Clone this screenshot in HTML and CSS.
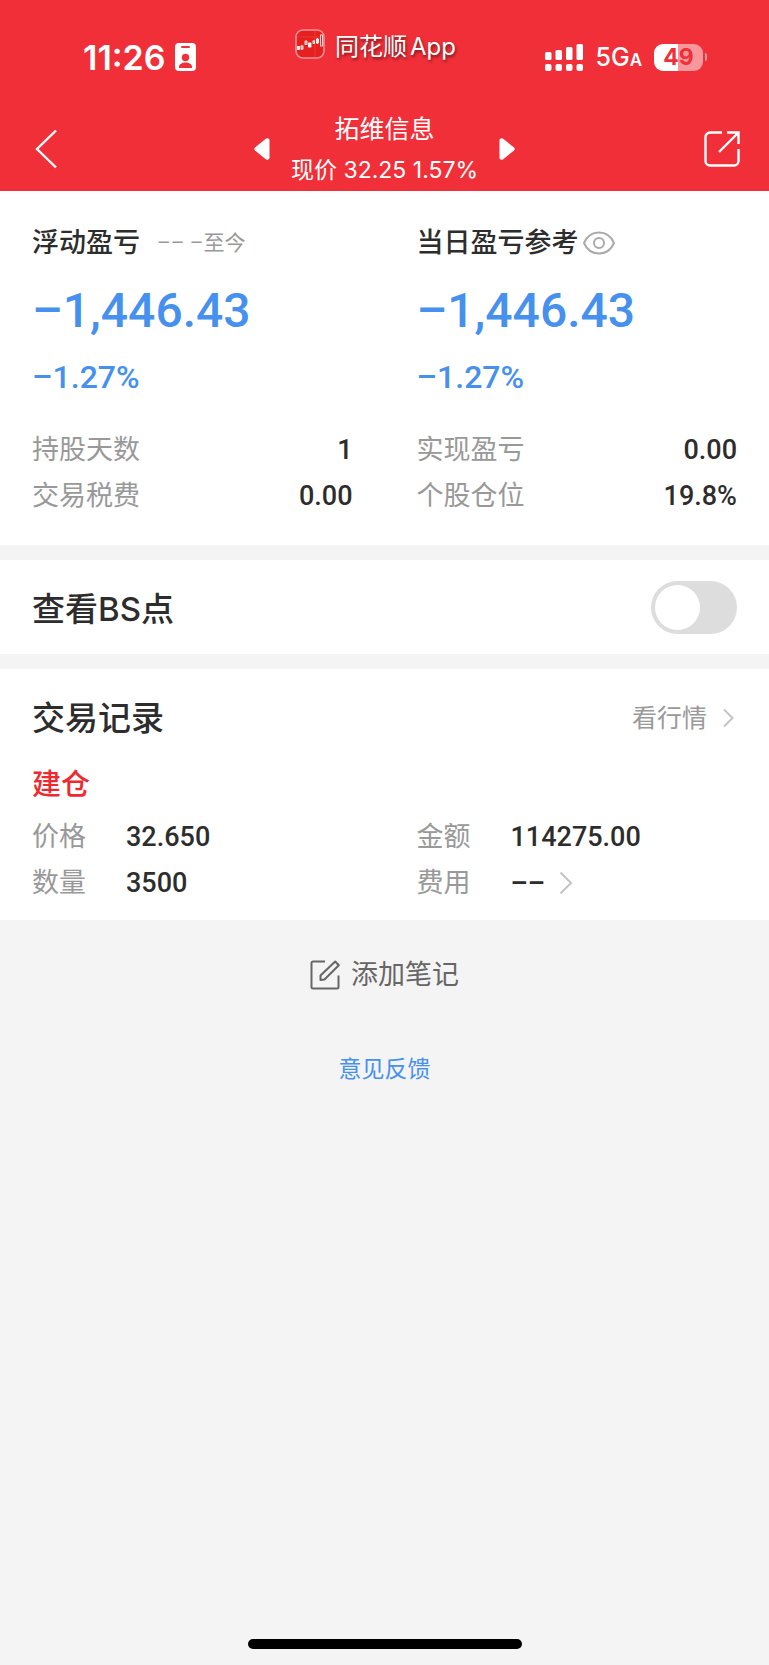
FILE: index.html
```html
<!DOCTYPE html>
<html lang="zh-CN">
<head>
    <meta charset="UTF-8">
    <meta name="viewport" content="width=device-width, initial-scale=1.0">
    <title>拓维信息</title>
    <link rel="stylesheet" href="styles.css">
</head>
<body>
    <header class="header">
        <div class="status-bar">
            <div class="status-left">
                <span class="clock">11:26</span>
                <svg class="id-icon" width="21" height="28" viewBox="0 0 21 28" aria-hidden="true">
                    <rect width="21" height="28" rx="4" fill="#fff"/>
                    <rect x="6" y="3" width="9" height="2" rx="1" fill="#f12f38"/>
                    <circle cx="10.500" cy="14.500" r="3.700" fill="#f12f38"/>
                    <path d="M4 25v-1c0-3 3-4.500 6.500-4.500S17 21 17 24v1z" fill="#f12f38"/>
                </svg>
            </div>
            <div class="app-name">
                <svg width="30" height="30" viewBox="0 0 30 30" aria-hidden="true">
                    <rect x="1" y="1" width="28" height="28" rx="7" fill="#e5201f" stroke="#f99297" stroke-width="1.600"/>
                    <path d="M2 8h26M20 2v26" stroke="#f04a4a" stroke-width=".5"/>
                    <g fill="#fff" stroke="#fff" stroke-width=".8">
                        <rect x="2.500" y="17.500" width="2" height="3"/>
                        <rect x="6" y="17" width="2" height="3" fill="none"/>
                        <path d="M7 16v5M11 11v5M19 11v4M22.500 9v6"/>
                        <rect x="10" y="12.500" width="2" height="3" fill="none"/>
                        <rect x="13.500" y="14" width="2.500" height="4"/>
                        <rect x="18" y="12" width="1.500" height="2.500" fill="none"/>
                        <rect x="21.500" y="10" width="2" height="4"/>
                        <rect x="25.500" y="6" width="2" height="11" fill="none"/>
                    </g>
                </svg>
                <span>同花顺<span class="app-suffix">App</span></span>
            </div>
            <div class="status-right">
                <svg width="38" height="27" viewBox="0 0 38 27" fill="#fff" aria-hidden="true">
                    <rect x="0" y="8" width="6.500" height="8" rx="1.500"/>
                    <rect x="10.500" y="6" width="6.500" height="10" rx="1.500"/>
                    <rect x="21" y="3" width="6.500" height="13" rx="1.500"/>
                    <rect x="31.500" y="0" width="6.500" height="16" rx="1.500"/>
                    <rect x="0" y="20" width="6.500" height="7" rx="2"/>
                    <rect x="10.500" y="20" width="6.500" height="7" rx="2"/>
                    <rect x="21" y="20" width="6.500" height="7" rx="2"/>
                    <rect x="31.500" y="20" width="6.500" height="7" rx="2"/>
                </svg>
                <span class="network">5G<small>A</small></span>
                <div class="battery"><span>4</span><span>9</span></div>
            </div>
        </div>
        <nav class="nav-bar">
            <button class="icon-btn back" aria-label="返回">
                <svg width="22" height="40" viewBox="0 0 22 40" fill="none" stroke="#fff" stroke-width="2.400"><path d="M21 1.500 2 20l19 18.500"/></svg>
            </button>
            <div class="stock">
                <button class="icon-btn" aria-label="上一只">
                    <svg width="16" height="22" viewBox="0 0 16 22" fill="#fff"><path d="M15.500 2.500v17c0 2-2 3-3.700 1.700L1 12.500Q-.5 11 1 9.500L11.800.8C13.500-.5 15.500.5 15.500 2.500z"/></svg>
                </button>
                <div class="stock-info">
                    <h1>拓维信息</h1>
                    <p>现价 32.25 1.57%</p>
                </div>
                <button class="icon-btn" aria-label="下一只">
                    <svg width="16" height="22" viewBox="0 0 16 22" fill="#fff"><path d="M.5 2.500v17c0 2 2 3 3.700 1.700L15 12.500q1.500-1.500 0-3L4.200.8C2.500-.5.5.5.5 2.500z"/></svg>
                </button>
            </div>
            <button class="icon-btn share" aria-label="分享">
                <svg width="36" height="36" viewBox="0 0 36 36" fill="none" stroke="#fff" stroke-width="2.400"><path d="M18 1.500H6A4.500 4.500 0 0 0 1.500 6v24A4.500 4.500 0 0 0 6 34.500h24a4.500 4.500 0 0 0 4.500-4.500V18M23 1.500h11.500V13M34 2 15 21"/></svg>
            </button>
        </nav>
    </header>

    <main>
        <section class="card summary">
            <div class="summary-col">
                <h2>浮动盈亏 <small>–– –至今</small></h2>
                <p class="amount">–1,446.43</p>
                <p class="percent">–1.27%</p>
                <dl class="stats">
                    <div><dt>持股天数</dt><dd>1</dd></div>
                    <div><dt>交易税费</dt><dd>0.00</dd></div>
                </dl>
            </div>
            <div class="summary-col">
                <h2>当日盈亏参考
                    <button class="icon-btn eye" aria-label="显示或隐藏金额">
                        <svg width="32" height="24" viewBox="0 0 32 24" fill="none" stroke="#aaa" stroke-width="2"><path d="M1 12C4 5 9 1.500 16 1.500S28 5 31 12c-3 7-8 10.500-15 10.500S4 19 1 12z"/><circle cx="16" cy="12" r="5"/></svg>
                    </button>
                </h2>
                <p class="amount">–1,446.43</p>
                <p class="percent">–1.27%</p>
                <dl class="stats">
                    <div><dt>实现盈亏</dt><dd>0.00</dd></div>
                    <div><dt>个股仓位</dt><dd>19.8%</dd></div>
                </dl>
            </div>
        </section>

        <section class="card bs-row">
            <label for="bsSwitch">查看BS点</label>
            <input type="checkbox" role="switch" id="bsSwitch" class="switch">
        </section>

        <section class="card records">
            <div class="records-header">
                <h2>交易记录</h2>
                <a href="#quote">看行情
                    <svg width="11" height="20" viewBox="0 0 11 20" fill="none" stroke="#c4c4c4" stroke-width="2"><path d="m1 1.500 8.500 8.500L1 18.500"/></svg>
                </a>
            </div>
            <h3>建仓</h3>
            <dl class="details">
                <div><dt>价格</dt><dd>32.650</dd></div>
                <div><dt>金额</dt><dd>114275.00</dd></div>
                <div><dt>数量</dt><dd>3500</dd></div>
                <div>
                    <dt>费用</dt>
                    <dd>––
                        <button class="icon-btn" aria-label="费用明细">
                            <svg width="14" height="24" viewBox="0 0 14 24" fill="none" stroke="#c4c4c4" stroke-width="2"><path d="m1.500 1.500 10.500 10.500L1.500 22.500"/></svg>
                        </button>
                    </dd>
                </div>
            </dl>
        </section>

        <div class="actions">
            <button class="note-btn">
                <svg width="30" height="30" viewBox="0 0 30 30" fill="none" stroke="#666" stroke-width="2"><path d="M15 1.500H3A1.500 1.500 0 0 0 1.500 3v24A1.500 1.500 0 0 0 3 28.500h24a1.500 1.500 0 0 0 1.500-1.500V15.500"/><path d="m10.500 15.500 14.700-14 3.600 3.700L14.500 19.500l-4 .5z" stroke-linejoin="round"/></svg>
                添加笔记
            </button>
            <a href="#feedback" class="feedback">意见反馈</a>
        </div>
    </main>

    <div class="home-indicator"></div>
</body>
</html>
```
FILE: styles.css
```css
* {
    box-sizing: border-box;
}
body {
    margin: 0;
    min-height: 100vh;
    display: flex;
    flex-direction: column;
    background: #f4f4f4;
    color: #2d2d2d;
    font-family: 'Inter', 'Noto Sans CJK SC', sans-serif;
    font-size: 27px;
}
h1, h2, h3, p, dl, dd {
    margin: 0;
    font-weight: normal;
}
svg {
    display: block;
    flex: none;
}
.icon-btn {
    display: flex;
    padding: 0;
    border: none;
    background: none;
    cursor: pointer;
}

/* Header */
.header {
    background: #f12f38;
    color: white;
}
.status-bar {
    display: grid;
    grid-template-columns: 1fr auto 1fr;
    height: 106px;
    padding: 0 62px;
}
.status-left, .status-right {
    display: flex;
    align-items: center;
    height: 114px;
}
.status-left {
    gap: 9px;
    padding-left: 21px;
}
.status-right {
    justify-content: flex-end;
    gap: 12px;
}
.clock {
    font-size: 34px;
    font-weight: 600;
}
.app-name {
    display: flex;
    align-items: center;
    gap: 10px;
    height: 88px;
    padding-right: 18px;
    font-size: 24px;
    white-space: nowrap;
    text-shadow: 1px 2px 3px rgba(0,0,0,0.5);
}
.app-suffix {
    margin-left: 3px;
}
.network {
    font-size: 25px;
    font-weight: 500;
}
.network small {
    font-size: 17px;
    font-weight: 600;
}
.battery {
    position: relative;
    display: flex;
    justify-content: center;
    align-items: center;
    width: 49px;
    height: 27px;
    margin-right: 4px;
    border-radius: 9px;
    background: linear-gradient(90deg, white 49%, #f8979b 49%);
    color: #f12f38;
    font-size: 23px;
    font-weight: 700;
}
.battery::after {
    content: '';
    position: absolute;
    right: -4px;
    width: 2px;
    height: 8px;
    border-radius: 0 2px 2px 0;
    background: #f8979b;
}
.nav-bar {
    display: grid;
    grid-template-columns: 1fr auto 1fr;
    align-items: center;
    height: 85px;
    padding: 0 29px;
}
.back {
    padding-left: 6px;
}
.stock {
    display: flex;
    align-items: center;
    gap: 21px;
}
.stock-info {
    text-align: center;
}
.stock-info h1 {
    font-size: 25px;
    line-height: 42px;
}
.stock-info p {
    font-size: 23px;
    line-height: 40px;
}
.share {
    justify-self: end;
}

/* Cards */
.card {
    margin-bottom: 15px;
    padding: 0 32px;
    background: white;
}
.summary {
    display: grid;
    grid-template-columns: 1fr 1fr;
    gap: 64px;
    padding-top: 32px;
    padding-bottom: 26px;
}
.summary h2 {
    display: flex;
    align-items: center;
    font-size: 27px;
    font-weight: 500;
    line-height: 40px;
    white-space: nowrap;
}
.summary h2 small {
    margin-left: 17px;
    color: #999;
    font-family: 'Roboto', 'Noto Sans CJK SC', sans-serif;
    font-size: 21px;
    font-weight: normal;
}
.eye {
    margin-left: 4px;
}
.amount, .percent {
    color: #4691ee;
    font-family: 'Roboto', 'Noto Sans CJK SC', sans-serif;
    font-weight: 500;
}
.amount {
    margin-top: 18px;
    font-size: 48px;
    line-height: 60px;
}
.percent {
    margin-top: 16px;
    font-size: 32px;
    line-height: 40px;
}
.stats {
    margin-top: 30px;
}
.stats div, .details div {
    display: flex;
    align-items: center;
    line-height: 46px;
}
.stats div {
    justify-content: space-between;
}
dt {
    color: #999;
}
dd {
    font-family: 'Roboto', 'Noto Sans CJK SC', sans-serif;
    font-size: 27px;
    font-weight: 500;
}

.bs-row {
    display: flex;
    justify-content: space-between;
    align-items: center;
    height: 94px;
    font-size: 33px;
    font-weight: 500;
}
.switch {
    appearance: none;
    width: 86px;
    height: 53px;
    margin: 0;
    padding: 4px;
    border-radius: 27px;
    background: #ddd;
    cursor: pointer;
}
.switch::before {
    content: '';
    display: block;
    width: 45px;
    height: 45px;
    border-radius: 50%;
    background: white;
}
.switch:checked {
    background: #f12f38;
}
.switch:checked::before {
    margin-left: auto;
}

.records {
    margin-bottom: 0;
    padding-top: 24px;
    padding-bottom: 14px;
}
.records-header {
    display: flex;
    justify-content: space-between;
    align-items: center;
    line-height: 50px;
}
.records-header h2 {
    font-size: 33px;
    font-weight: 500;
}
.records-header a {
    display: flex;
    align-items: center;
    gap: 16px;
    padding-right: 3px;
    color: #999;
    font-size: 25px;
    text-decoration: none;
}
.records h3 {
    margin-top: 22px;
    color: #ee2a30;
    font-size: 29px;
    font-weight: 500;
    line-height: 40px;
}
.details {
    display: grid;
    grid-template-columns: 1fr 1fr;
    column-gap: 64px;
    margin-top: 9px;
}
.details div {
    gap: 40px;
}
.details dd {
    display: flex;
    align-items: center;
    gap: 14px;
}

/* Bottom actions */
.actions {
    display: flex;
    flex-direction: column;
    align-items: center;
    gap: 54px;
    padding-top: 35px;
}
.note-btn {
    display: flex;
    align-items: center;
    gap: 11px;
    padding: 0;
    border: none;
    background: none;
    color: #666;
    font-family: inherit;
    font-size: 27px;
    line-height: 40px;
    cursor: pointer;
}
.feedback {
    color: #4691ee;
    font-size: 23px;
    line-height: 40px;
    text-decoration: none;
}
.home-indicator {
    width: 274px;
    height: 10px;
    margin: auto auto 16px;
    border-radius: 5px;
    background: black;
}
```
